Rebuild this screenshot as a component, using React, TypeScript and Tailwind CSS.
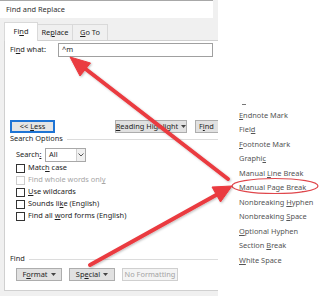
import React from 'react';

type BtnProps = {
  children: React.ReactNode;
  className?: string;
  disabled?: boolean;
  caret?: boolean;
  focused?: boolean;
};

const Caret = ({ color }: { color: string }) => (
  <svg width="5" height="3" viewBox="0 0 5 3" className="ml-[3px] shrink-0">
    <path d="M0 0h5L2.5 3z" fill={color} />
  </svg>
);

const Btn = ({ children, className = '', disabled, caret, focused }: BtnProps) => (
  <div
    className={`h-[13px] shrink-0 flex items-center justify-center whitespace-nowrap border ${
      focused
        ? 'border-[#1f74d4] shadow-[inset_0_0_0_1px_#1f74d4] bg-[#e5e5e5]'
        : disabled
        ? 'border-[#cfcfcf] bg-[#f4f4f4] text-[#a3a3a3]'
        : 'border-[#adadad] bg-[#e1e1e1]'
    } ${className}`}
  >
    <span>{children}</span>
    {caret && <Caret color="#444" />}
  </div>
);

const Check = ({ children, disabled }: { children: React.ReactNode; disabled?: boolean }) => (
  <div className="h-[12px] flex items-center pl-[11px] whitespace-nowrap">
    <div
      className={`w-[9px] h-[9px] shrink-0 bg-white border ${
        disabled ? 'border-[#cccccc]' : 'border-[#333]'
      }`}
    />
    <span className={`ml-[3px] ${disabled ? 'text-[#a6a6a6]' : ''}`}>{children}</span>
  </div>
);

const menuItems: React.ReactNode[] = [
  <><u>E</u>ndnote Mark</>,
  <>Fiel<u>d</u></>,
  <><u>F</u>ootnote Mark</>,
  <>Graphi<u>c</u></>,
  <>Manual <u>L</u>ine Break</>,
  <>Manual Page Brea<u>k</u></>,
  <>Nonbreaking <u>H</u>yphen</>,
  <>Nonbreaking <u>S</u>pace</>,
  <><u>O</u>ptional Hyphen</>,
  <>Section <u>B</u>reak</>,
  <><u>W</u>hite Space</>,
];

export default function App() {
  return (
    <div className="relative w-[335px] h-[296px] bg-white flex overflow-hidden font-['Noto_Sans',sans-serif] text-[7.4px] text-[#1e1e1e] leading-none">
      {/* dialog */}
      <div className="w-[218px] h-full shrink-0 flex flex-col overflow-hidden bg-[#f0f0f0]">
        <div className="w-[213px] h-[18px] bg-white border-t border-[#a8a8a8] flex items-center pl-[6px] text-[#333]">
          <span>Find and Replace</span>
        </div>
        <div className="w-[213px] h-[22px] flex items-end pl-[4px]">
          <div className="relative z-10 -mb-px w-[34px] h-[19px] bg-white border border-b-0 border-[#d9d9d9] flex items-center justify-center">
            <span>Fi<u>n</u>d</span>
          </div>
          <div className="w-[35px] h-[16px] border border-l-0 border-b-0 border-[#d9d9d9] bg-[#f0f0f0] flex items-center justify-center">
            <span>Re<u>p</u>lace</span>
          </div>
          <div className="w-[35px] h-[16px] border border-l-0 border-b-0 border-[#d9d9d9] bg-[#f0f0f0] flex items-center justify-center">
            <span><u>G</u>o To</span>
          </div>
        </div>

        <div className="ml-[4px] h-[251px] bg-white border border-r-0 border-[#d0d0d0] flex flex-col">
          <div className="mt-[2px] h-[14px] flex items-center pl-[5px]">
            <span className="w-[48px] shrink-0">
              Fi<u>n</u>d what:
            </span>
            <div className="w-[155px] h-[14px] shrink-0 border border-[#a0a0a0] flex items-center pl-[3px]">
              <span>^m</span>
            </div>
          </div>

          <div className="mt-[63px] flex pl-[5px]">
            <Btn focused className="w-[45px]">
              &lt;&lt; <u>L</u>ess
            </Btn>
            <Btn caret className="ml-[60px] w-[72px]">
              <u>R</u>eading Highlight
            </Btn>
            <div className="ml-[8px] w-[40px] h-[13px] shrink-0 flex items-center pl-[3px] border border-[#adadad] bg-[#e1e1e1]">
              <span>
                F<u>i</u>nd
              </span>
            </div>
          </div>

          <div className="mt-[1px] h-[10px] flex items-center pl-[5px]">
            <span>Search Options</span>
            <div className="flex-1 h-px bg-[#dcdcdc] ml-[4px]" />
          </div>

          <div className="mt-[4px] h-[14px] flex items-center pl-[11px]">
            <span className="w-[29px] shrink-0">
              Search<u>:</u>
            </span>
            <div className="w-[41px] h-[14px] border border-[#a8a8a8] bg-white flex items-center">
              <span className="flex-1 pl-[3px]">All</span>
              <div className="w-[9px] h-full border-l border-[#cfcfcf] bg-[#f0f0f0] flex items-center justify-center">
                <svg width="6" height="4" viewBox="0 0 6 4">
                  <path d="M0.5 0.5L3 3L5.5 0.5" fill="none" stroke="#555" strokeWidth="1" />
                </svg>
              </div>
            </div>
          </div>

          <Check>
            Matc<u>h</u> case
          </Check>
          <Check disabled>Find whole words onl<u>y</u></Check>
          <Check>
            <u>U</u>se wildcards
          </Check>
          <Check>
            Sounds li<u>k</u>e (English)
          </Check>
          <Check>
            Find all <u>w</u>ord forms (English)
          </Check>

          <div className="mt-[32px] h-[10px] flex items-center pl-[5px]">
            <span>Find</span>
            <div className="flex-1 h-px bg-[#dcdcdc] ml-[4px]" />
          </div>

          <div className="mt-[4px] flex pl-[11px]">
            <Btn caret className="w-[46px]">
              F<u>o</u>rmat
            </Btn>
            <Btn caret className="ml-[7px] w-[46px]">
              Sp<u>e</u>cial
            </Btn>
            <Btn disabled className="ml-[7px] w-[56px]">
              No Formatting
            </Btn>
          </div>
        </div>
      </div>

      {/* special characters menu */}
      <div className="flex-1 pt-[104px] pl-[21px] text-[#555]">
        <div className="ml-[3px] w-[4px] h-px bg-[#777]" />
        <div className="mt-[3px] flex flex-col">
          {menuItems.map((item, i) => (
            <div key={i} className="h-[14.5px] flex items-center whitespace-nowrap">
              <span>{item}</span>
            </div>
          ))}
        </div>
      </div>

      {/* annotation arrows */}
      <svg
        className="absolute inset-0 pointer-events-none"
        width="335"
        height="296"
        viewBox="0 0 335 296"
      >
        <defs>
          <filter id="sh" x="-10%" y="-10%" width="120%" height="120%">
            <feDropShadow dx="1" dy="1" stdDeviation="0.8" floodColor="#000" floodOpacity="0.25" />
          </filter>
        </defs>
        <ellipse cx="275" cy="186" rx="43" ry="7.5" fill="none" stroke="#e0474c" strokeWidth="1.2" />
        <g filter="url(#sh)" fill="#ea3a3f" stroke="#ea3a3f">
          <line x1="228" y1="179" x2="85" y2="68.5" strokeWidth="4" strokeLinecap="round" />
          <path d="M70 57L90.5 63L80 76z" strokeWidth="1" strokeLinejoin="round" />
          <line x1="90" y1="265" x2="217" y2="194.5" strokeWidth="4" strokeLinecap="round" />
          <path d="M232 186L220.5 202L212 187z" strokeWidth="1" strokeLinejoin="round" />
        </g>
      </svg>
    </div>
  );
}
